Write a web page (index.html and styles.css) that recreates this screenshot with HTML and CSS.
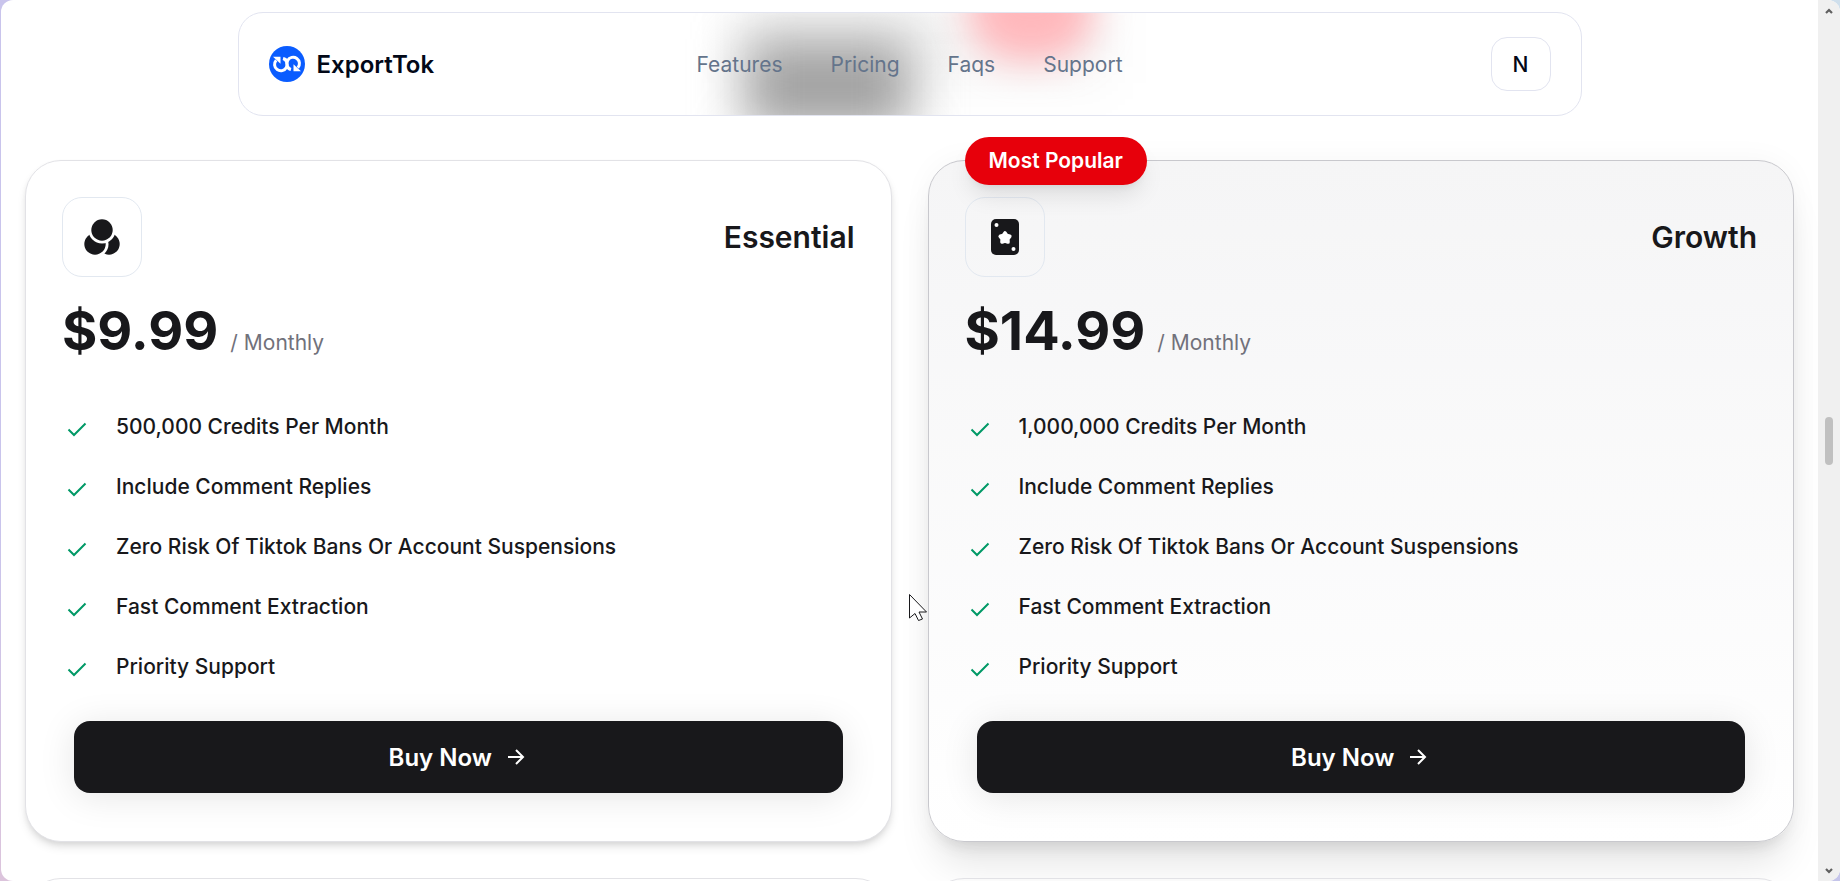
FILE: index.html
```html
<!DOCTYPE html>
<html lang="en">
<head>
<meta charset="utf-8">
<title>ExportTok</title>
<link rel="stylesheet" href="styles.css">
</head>
<body>
<svg class="defs" width="0" height="0" aria-hidden="true">
  <defs>
    <symbol id="check" viewBox="0 0 30 30"><path d="M6.500 17.500l5.500 5.500L23.500 11.500" fill="none" stroke="currentColor" stroke-width="2"/></symbol>
    <symbol id="arrow" viewBox="0 0 24 24"><path d="M4 12h15M12 5l7 7-7 7" fill="none" stroke="currentColor" stroke-width="2" stroke-linejoin="miter"/></symbol>
  </defs>
</svg>
<div class="window">
  <div class="page">
    <header class="header">
      <div class="glow" aria-hidden="true">
        <span class="glow-haze"></span><span class="glow-dark"></span><span class="glow-red"></span>
      </div>
      <a class="brand" href="#">
        <svg width="36" height="36" viewBox="0 0 36 36" aria-hidden="true">
          <circle cx="18" cy="18" r="18" fill="#0a5cff"/>
          <g fill="none" stroke="#fff" stroke-width="3">
            <path d="M7.200 14.200A6.300 6.300 0 1 0 14.200 12.600C15.500 12.800 17.500 14.200 18.500 16"/>
            <path d="M28.800 21.800A6.300 6.300 0 1 0 21.800 23.400C20.500 23.200 18.500 21.800 17.500 20"/>
          </g>
          <path d="M4 10.800h7.500v7z" fill="#fff"/>
          <path d="M32 25.200h-7.500v-7z" fill="#fff"/>
        </svg>
        <span>ExportTok</span>
      </a>
      <nav class="nav">
        <a href="#">Features</a><a href="#">Pricing</a><a href="#">Faqs</a><a href="#">Support</a>
      </nav>
      <button class="avatar" type="button">N</button>
    </header>

    <main class="plans">
      <article class="card">
        <div class="card-head">
          <span class="tile">
            <svg width="36" height="36" viewBox="0 0 36 36" fill="#18181b" aria-hidden="true">
              <mask id="m1"><rect width="36" height="36" fill="#fff"/><circle cx="18" cy="11" r="13.500" fill="#000"/></mask>
              <mask id="m2"><rect width="36" height="36" fill="#fff"/><circle cx="18" cy="11" r="13.500" fill="#000"/><circle cx="11" cy="25" r="13.500" fill="#000"/></mask>
              <circle cx="18" cy="11" r="10.700"/>
              <circle cx="11" cy="25" r="10.700" mask="url(#m1)"/>
              <circle cx="25" cy="25" r="10.700" mask="url(#m2)"/>
            </svg>
          </span>
          <h2>Essential</h2>
        </div>
        <p class="price"><strong>$9.99</strong><span>/ Monthly</span></p>
        <ul class="features">
          <li><svg><use href="#check"/></svg>500,000 Credits Per Month</li>
          <li><svg><use href="#check"/></svg>Include Comment Replies</li>
          <li><svg><use href="#check"/></svg>Zero Risk Of Tiktok Bans Or Account Suspensions</li>
          <li><svg><use href="#check"/></svg>Fast Comment Extraction</li>
          <li><svg><use href="#check"/></svg>Priority Support</li>
        </ul>
        <button class="buy" type="button">Buy Now<svg><use href="#arrow"/></svg></button>
      </article>

      <article class="card popular">
        <span class="badge">Most Popular</span>
        <div class="card-head">
          <span class="tile">
            <svg width="36" height="36" viewBox="0 0 36 36" aria-hidden="true">
              <rect x="4" width="28" height="36" rx="5" fill="#18181b"/>
              <circle cx="9.500" cy="6" r="2" fill="#fff"/>
              <circle cx="26.500" cy="30" r="2" fill="#fff"/>
              <path d="M18 14l1.800 2.500 3 .8-2 2.500.2 3.200-3-1-3 1 .2-3.200-2-2.500 3-.8z" fill="#fff" stroke="#fff" stroke-width="3.600" stroke-linejoin="round"/>
            </svg>
          </span>
          <h2>Growth</h2>
        </div>
        <p class="price"><strong>$14.99</strong><span>/ Monthly</span></p>
        <ul class="features">
          <li><svg><use href="#check"/></svg>1,000,000 Credits Per Month</li>
          <li><svg><use href="#check"/></svg>Include Comment Replies</li>
          <li><svg><use href="#check"/></svg>Zero Risk Of Tiktok Bans Or Account Suspensions</li>
          <li><svg><use href="#check"/></svg>Fast Comment Extraction</li>
          <li><svg><use href="#check"/></svg>Priority Support</li>
        </ul>
        <button class="buy" type="button">Buy Now<svg><use href="#arrow"/></svg></button>
      </article>

      <article class="card next"></article>
      <article class="card next"></article>
    </main>
  </div>

  <div class="scrollbar" aria-hidden="true">
    <svg width="8" height="6" viewBox="0 0 8 6"><path d="M1 5l3-3 3 3" fill="none" stroke="#606060" stroke-width="2.200"/></svg>
    <span class="thumb"></span>
    <svg width="8" height="6" viewBox="0 0 8 6"><path d="M1 1l3 3 3-3" fill="none" stroke="#606060" stroke-width="2.200"/></svg>
  </div>
</div>
<svg class="cursor" width="19" height="28" viewBox="0 0 19 28" aria-hidden="true"><path d="M.500.500v23.500l5.500-4.500 3.500 7 4-1.500-3.500-7h7.500z" fill="#fff" stroke="#18181b"/></svg>
</body>
</html>
```

FILE: styles.css
```css
* { box-sizing: border-box; }

body {
  margin: 0;
  height: 100vh;
  overflow: hidden;
  padding-left: 1px;
  background: linear-gradient(90deg, transparent 50%, #c5c5ea 50%) bottom / 100% 50% no-repeat,
    linear-gradient(90deg, transparent 50%, #cfdfec 50%) top / 100% 50% no-repeat,
    linear-gradient(#c9c4ec 60%, #dcc4dc);
  font-family: Inter, "Liberation Sans", sans-serif;
  color: #18181b;
}

.defs { position: absolute; }

.window {
  display: flex;
  height: 100%;
  overflow: hidden;
  border-radius: 12px;
  background: #fff;
}

.page {
  flex: 1;
  min-width: 0;
  overflow: hidden;
  padding: 12px 24px 0;
}

.header {
  position: relative;
  z-index: 1;
  display: grid;
  grid-template-columns: 1fr auto 1fr;
  align-items: center;
  max-width: 1344px;
  margin: 0 auto 44px;
  padding: 24px 30px;
  border: 1px solid #e2e4f0;
  border-radius: 25px;
  background: #fff;
}

.glow {
  position: absolute;
  inset: 0;
  overflow: hidden;
  border-radius: 24px;
}

.glow span { position: absolute; }

.glow-haze {
  left: 500px;
  top: -20px;
  width: 370px;
  height: 90px;
  background: #0000000a;
  filter: blur(24px);
}

.glow-dark {
  left: 506px;
  top: 26px;
  width: 166px;
  height: 92px;
  background: #a2a2a2;
  filter: blur(25px);
}

.glow-red {
  left: 729px;
  top: -56px;
  width: 126px;
  height: 104px;
  border-radius: 52px;
  background: #ffb8bc;
  filter: blur(18px);
}

.brand, .nav, .avatar { position: relative; }

.brand {
  display: flex;
  align-items: center;
  gap: 12px;
  color: #020817;
  font-size: 24px;
  font-weight: 600;
  text-decoration: none;
}

.nav {
  display: flex;
  gap: 48px;
}

.nav a {
  color: #64748b;
  font-size: 21px;
  text-decoration: none;
}

.avatar {
  justify-self: end;
  width: 60px;
  height: 54px;
  padding: 0;
  border: 1px solid #e2e4f0;
  border-radius: 16px;
  background: #fff;
  color: #020817;
  font: 500 21px Inter, sans-serif;
}

.plans {
  display: grid;
  grid-template-columns: 1fr 1fr;
  gap: 36px;
}

.card {
  position: relative;
  padding: 36px;
  border: 1px solid #e2e2e6;
  border-radius: 36px;
  background: #fff;
  box-shadow: 0 6px 10px -1px #0000001a, 0 3px 6px -2px #0000001a;
}

.popular {
  border-color: #c8c8cd;
  background: linear-gradient(#f5f5f6, #fff);
  box-shadow: 0 30px 38px -8px #0000001a, 0 12px 15px -9px #0000001a, 0 0 30px #0000000a;
}

.next {
  min-height: 200px;
  box-shadow: none;
  background: none;
}

.badge {
  position: absolute;
  left: 36px;
  top: -24px;
  padding: 0 24px;
  border-radius: 24px;
  background: #e7000b;
  box-shadow: 0 15px 23px -5px #0000001a, 0 6px 9px -6px #0000001a;
  color: #fff;
  font-size: 21px;
  font-weight: 600;
  line-height: 48px;
}

.card-head {
  display: flex;
  align-items: center;
  justify-content: space-between;
}

.tile {
  display: grid;
  place-items: center;
  width: 80px;
  height: 80px;
  border: 1px solid #e2e8f0;
  border-radius: 20px;
}

h2 {
  margin: 0;
  font-size: 30px;
  font-weight: 600;
}

.price {
  display: flex;
  align-items: baseline;
  gap: 12px;
  margin: 24px 0;
  line-height: 60px;
}

.price strong {
  font-size: 54px;
  font-weight: 700;
}

.price span {
  color: #71717b;
  font-size: 21px;
}

.features {
  margin: 0;
  padding: 0;
  list-style: none;
}

.features li {
  display: flex;
  align-items: center;
  gap: 24px;
  font-size: 21px;
  font-weight: 500;
  line-height: 60px;
}

.features svg {
  width: 30px;
  height: 30px;
  color: #009966;
}

.buy {
  display: flex;
  align-items: center;
  justify-content: center;
  gap: 12px;
  width: calc(100% - 24px);
  height: 72px;
  margin: 24px 12px 12px;
  border: 0;
  border-radius: 16px;
  background: #18181b;
  box-shadow: 0 4px 36px #0000001a;
  color: #fff;
  font: 600 24px Inter, sans-serif;
}

.buy svg {
  width: 24px;
  height: 24px;
}

.scrollbar {
  display: flex;
  flex-direction: column;
  align-items: center;
  justify-content: space-between;
  width: 22px;
  padding: 8px 0 7px;
  background: #f0f0f0;
}

.thumb {
  width: 8px;
  height: 48px;
  border-radius: 4px;
  background: #c0c0c0;
}

.cursor {
  position: absolute;
  left: 909px;
  top: 594px;
}
```
